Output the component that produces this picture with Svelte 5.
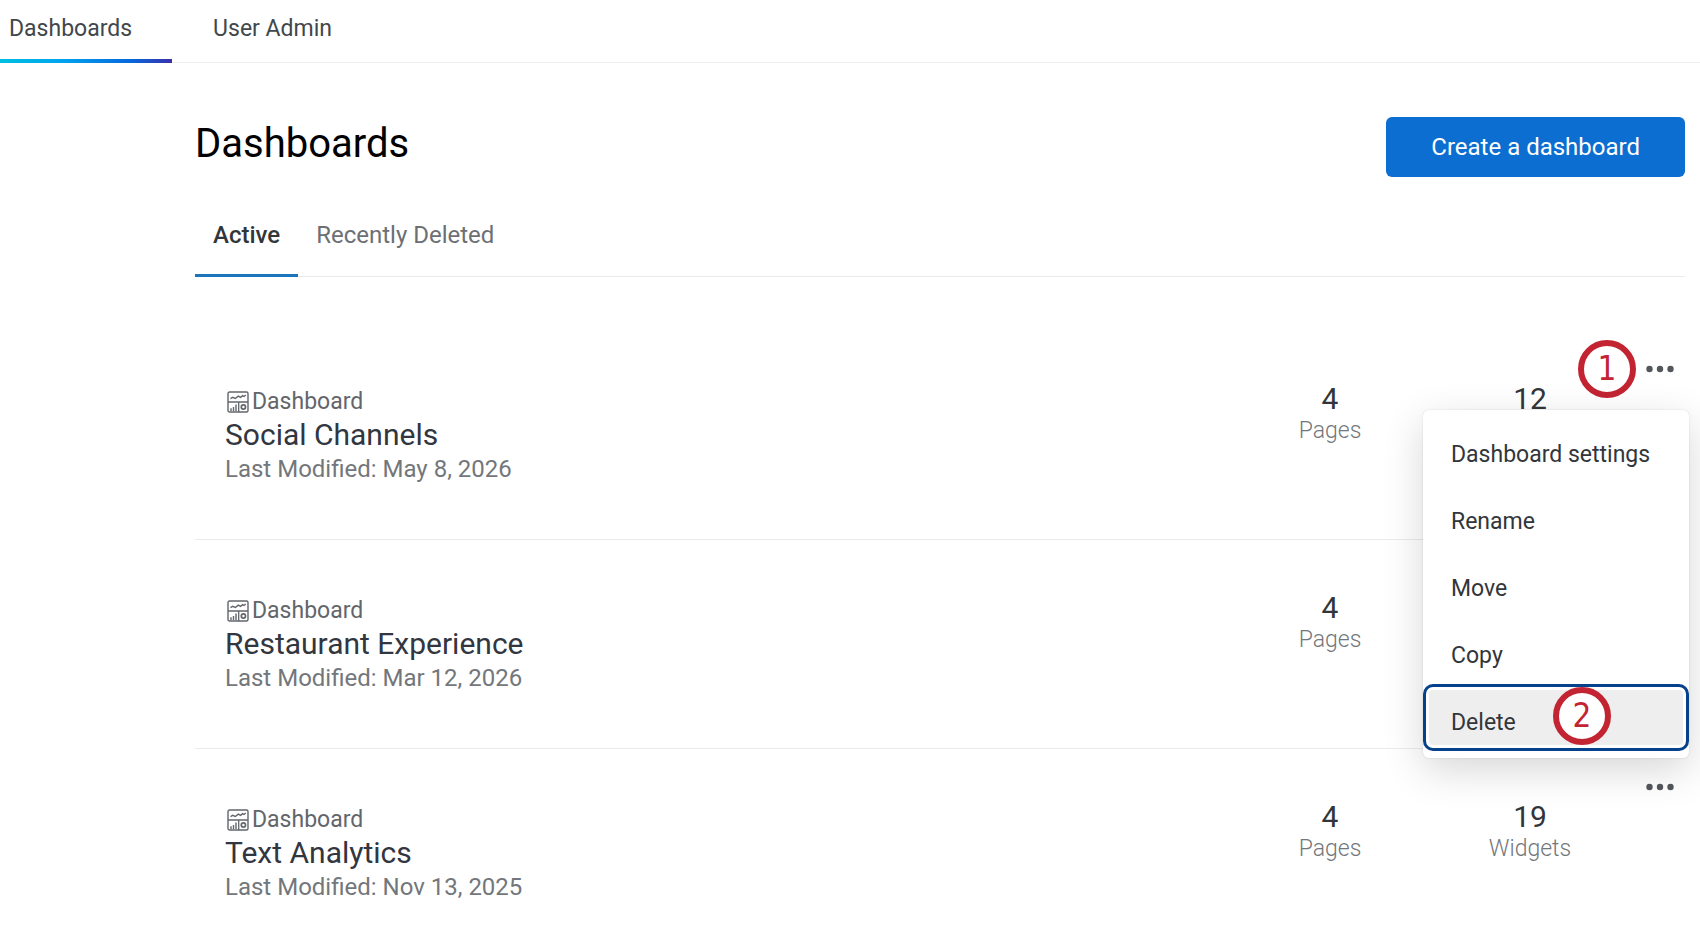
<script>
  const navItems = ["Dashboards", "User Admin"];
  const tabs = ["Active", "Recently Deleted"];

  const dashboards = [
    { name: "Social Channels", modified: "May 8, 2026", pages: 4, widgets: 12 },
    { name: "Restaurant Experience", modified: "Mar 12, 2026", pages: 4, widgets: 16 },
    { name: "Text Analytics", modified: "Nov 13, 2025", pages: 4, widgets: 19 },
  ];

  const menuItems = ["Dashboard settings", "Rename", "Move", "Copy", "Delete"];

  let currentNav = $state("Dashboards");
  let currentTab = $state("Active");
  let openMenu = $state(0);

  function toggleMenu(index) {
    openMenu = openMenu === index ? -1 : index;
  }
</script>

<nav class="top-nav">
  {#each navItems as item}
    <a
      href="#{item.toLowerCase().replace(' ', '-')}"
      class="nav-link"
      class:current={currentNav === item}
      onclick={() => (currentNav = item)}>{item}</a
    >
  {/each}
</nav>

<main>
  <header>
    <h1>Dashboards</h1>
    <button class="create">Create a dashboard</button>
  </header>

  <div class="tabs" role="tablist">
    {#each tabs as tab}
      <button
        class="tab"
        class:selected={currentTab === tab}
        role="tab"
        aria-selected={currentTab === tab}
        onclick={() => (currentTab = tab)}>{tab}</button
      >
    {/each}
  </div>

  <ul class="list">
    {#each dashboards as item, i}
      <li class="row">
        <div class="info">
          <div class="type">
            <svg width="22" height="22" viewBox="0 0 22 22" fill="none" stroke="currentColor" aria-hidden="true">
              <rect x="1" y="1" width="20" height="20" rx="1.5" stroke-width="1.4" />
              <path d="M1 11h20M11.7 11v10" stroke-width="1.3" />
              <path d="M3.5 7.6l2.2-1.2 2.6 1.1 3-2.4 2.3 1.2 2-1.6 1.4.8L18.8 4" stroke-width="1.4" />
              <path d="M4 20v-2.8M6.5 20v-4M9 20v-6.5" stroke-width="1.4" />
              <circle cx="16.4" cy="16" r="2.1" stroke-width="1.7" />
            </svg>
            <span>Dashboard</span>
          </div>
          <h2>{item.name}</h2>
          <p class="modified">Last Modified: {item.modified}</p>
        </div>
        <div class="stat">
          <strong>{item.pages}</strong>
          <span>Pages</span>
        </div>
        <div class="stat">
          <strong>{item.widgets}</strong>
          <span>Widgets</span>
        </div>
        <div class="actions">
          <button
            class="more"
            aria-label="More options for {item.name}"
            aria-expanded={openMenu === i}
            onclick={() => toggleMenu(i)}
          >
            <svg width="28" height="8" viewBox="0 0 28 8" fill="currentColor" aria-hidden="true">
              <circle cx="3.5" cy="4" r="3.2" />
              <circle cx="14" cy="4" r="3.2" />
              <circle cx="24.5" cy="4" r="3.2" />
            </svg>
          </button>
          {#if openMenu === i}
            <span class="step step-more">1</span>
            <div class="menu" role="menu">
              {#each menuItems as option}
                <button class="option" class:focused={option === "Delete"} role="menuitem">
                  {option}
                  {#if option === "Delete"}
                    <span class="step step-delete">2</span>
                  {/if}
                </button>
              {/each}
            </div>
          {/if}
        </div>
      </li>
    {/each}
  </ul>
</main>

<style>
  :global(body) {
    margin: 0;
    background: #fff;
    color: #32363a;
    font-family: Roboto, "Liberation Sans", sans-serif;
    font-size: 23px;
    line-height: 32px;
  }

  button {
    border: 0;
    background: none;
    font: inherit;
    color: inherit;
    cursor: pointer;
  }

  .top-nav {
    display: flex;
    border-bottom: 1px solid #eeeff1;
  }

  .nav-link {
    box-sizing: border-box;
    height: 63px;
    margin: 0 32px -1px 0;
    padding: 13px 40px 0 9px;
    border-bottom: 4px solid transparent;
    color: #42474c;
    text-decoration: none;
  }

  .nav-link.current {
    border-image: linear-gradient(90deg, #00bfe0, #00a5ee 35%, #0768dd 75%, #3a30a8) 1;
    border-width: 0 0 4px;
    border-style: solid;
  }

  main {
    padding: 54px 15px 0 195px;
  }

  header {
    display: flex;
    align-items: flex-start;
    justify-content: space-between;
  }

  h1 {
    margin: 0;
    font-size: 40px;
    font-weight: 400;
    line-height: 54px;
    color: #000;
  }

  .create {
    height: 60px;
    padding: 0 45px;
    border-radius: 6px;
    background: #0b6ed0;
    color: #fff;
    font-size: 24px;
  }

  .tabs {
    display: flex;
    margin-top: 40px;
    border-bottom: 1px solid #e9eaec;
  }

  .tab {
    height: 60px;
    margin-bottom: -1px;
    padding: 0 18px 21px;
    border-bottom: 3px solid transparent;
    font-size: 24px;
    line-height: 36px;
    color: #6c7074;
  }

  .tab.selected {
    border-bottom-color: #1a75bc;
    font-weight: 500;
    color: #32363a;
  }

  .list {
    margin: 54px 0 0;
    padding: 0;
    list-style: none;
  }

  .row {
    display: flex;
    align-items: flex-start;
    height: 208px;
    border-bottom: 1px solid #e9eaec;
  }

  .row:last-child {
    border-bottom: 0;
    height: 176px;
  }

  .info {
    flex: 1;
    padding: 55px 0 0 30px;
  }

  .type {
    display: flex;
    align-items: center;
    gap: 3px;
    padding-left: 2px;
    color: #62666b;
  }

  h2 {
    margin: 0;
    font-size: 30px;
    font-weight: 400;
    line-height: 34px;
    color: #32363f;
  }

  .modified {
    margin: 0;
    font-size: 24px;
    line-height: 34px;
    color: #73777b;
  }

  .stat {
    display: flex;
    flex-direction: column;
    align-items: center;
    width: 200px;
    padding-top: 52px;
    color: #73777b;
    font-weight: 300;
  }

  .stat strong {
    font-size: 30px;
    font-weight: 400;
    color: #32363a;
  }

  .actions {
    position: relative;
    width: 55px;
  }

  .more {
    display: flex;
    margin: 22px 0 0 4px;
    padding: 12px;
    color: #53575c;
  }

  .menu {
    position: absolute;
    z-index: 1;
    top: 79px;
    right: -4px;
    box-sizing: border-box;
    width: 266px;
    padding: 6px 0 7px;
    border-radius: 6px;
    background: #fff;
    box-shadow:
      0 0 2px rgba(0, 0, 0, 0.14),
      0 12px 40px rgba(0, 0, 0, 0.16);
  }

  .option {
    position: relative;
    display: block;
    width: 100%;
    height: 67px;
    padding: 11px 28px 0;
    text-align: left;
    white-space: nowrap;
  }

  .option.focused {
    border-radius: 10px;
    background: #eee;
    box-shadow:
      inset 0 0 0 3px #06418c,
      inset 0 0 0 6px #fff;
  }

  .step {
    position: absolute;
    box-sizing: border-box;
    width: 58px;
    height: 58px;
    border: 6px solid #c32432;
    border-radius: 50%;
    background: #fff;
    color: #c32432;
    font-family: "DejaVu Sans Condensed", "DejaVu Sans", sans-serif;
    font-size: 33px;
    font-weight: 400;
    line-height: 46px;
    text-align: center;
  }

  .step-more {
    top: 9px;
    right: 49px;
  }

  .step-delete {
    top: 3px;
    left: 130px;
  }
</style>
